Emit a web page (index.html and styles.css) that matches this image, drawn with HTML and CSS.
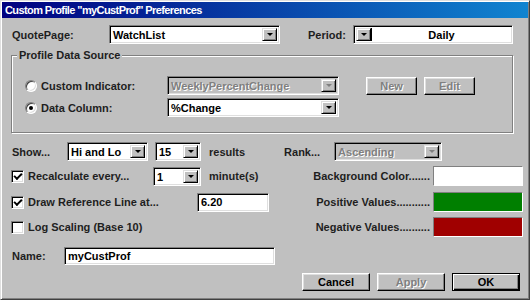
FILE: index.html
```html
<!DOCTYPE html>
<html>
<head>
<meta charset="utf-8">
<link rel="stylesheet" href="styles.css">
</head>
<body>
<div class="window">
  <div class="titlebar">Custom Profile "myCustProf" Preferences</div>
  <div class="content">
    <div class="row row-quote">
      <span class="lbl lbl-quote">QuotePage:</span>
      <div class="combo combo-quote"><span class="val">WatchList</span><span class="arrow"></span></div>
      <span class="lbl lbl-period">Period:</span>
      <div class="combo combo-period"><span class="arrow"></span><span class="val val-center">Daily</span></div>
    </div>

    <fieldset class="group">
      <legend>Profile Data Source</legend>
      <div class="row row-src1">
        <span class="radio"></span>
        <span class="lbl lbl-src">Custom Indicator:</span>
        <div class="combo combo-src disabled"><span class="val">WeeklyPercentChange</span><span class="arrow"></span></div>
        <button class="btn btn-small disabled btn-new">New</button>
        <button class="btn btn-small disabled">Edit</button>
      </div>
      <div class="row row-src2">
        <span class="radio checked"></span>
        <span class="lbl lbl-src">Data Column:</span>
        <div class="combo combo-src"><span class="val">%Change</span><span class="arrow"></span></div>
      </div>
    </fieldset>

    <div class="row row-show">
      <span class="lbl lbl-show">Show...</span>
      <div class="combo combo-hilo"><span class="val">Hi and Lo</span><span class="arrow"></span></div>
      <div class="combo combo-num"><span class="val">15</span><span class="arrow"></span></div>
      <span class="lbl lbl-results">results</span>
      <span class="lbl lbl-rank">Rank...</span>
      <div class="combo combo-rank disabled"><span class="val">Ascending</span><span class="arrow"></span></div>
    </div>

    <div class="row row-recalc">
      <span class="check checked"></span>
      <span class="lbl lbl-recalc">Recalculate every...</span>
      <div class="combo combo-min"><span class="val">1</span><span class="arrow"></span></div>
      <span class="lbl lbl-results">minute(s)</span>
      <span class="lbl lbl-color">Background Color.......</span>
      <span class="swatch swatch-white"></span>
    </div>

    <div class="row row-ref">
      <span class="check checked"></span>
      <span class="lbl lbl-ref">Draw Reference Line at...</span>
      <div class="field field-ref">6.20</div>
      <span class="lbl lbl-color lbl-pos">Positive Values...........</span>
      <span class="swatch swatch-green"></span>
    </div>

    <div class="row row-log">
      <span class="check"></span>
      <span class="lbl lbl-log">Log Scaling (Base 10)</span>
      <span class="lbl lbl-color lbl-neg">Negative Values..........</span>
      <span class="swatch swatch-red"></span>
    </div>

    <div class="row row-name">
      <span class="lbl lbl-name">Name:</span>
      <div class="field field-name">myCustProf</div>
    </div>

    <div class="row row-buttons">
      <button class="btn btn-big">Cancel</button>
      <button class="btn btn-big disabled">Apply</button>
      <button class="btn btn-big btn-default">OK</button>
    </div>
  </div>
</div>
</body>
</html>
```

FILE: styles.css
```css
* { box-sizing: border-box; }
html, body { margin: 0; padding: 0; }
body {
  width: 530px;
  height: 300px;
  overflow: hidden;
  background: #c0c0c0;
  font-family: "Liberation Sans", Arial, sans-serif;
  font-size: 11px;
  font-weight: bold;
  color: #1e1e1e;
}
.window {
  width: 530px;
  height: 300px;
  background: #c0c0c0;
  border: 1px solid;
  border-color: #dfdfdf #404040 #404040 #dfdfdf;
  box-shadow: inset 1px 1px #fff, inset -1px -1px #808080;
  padding: 1px;
}
.titlebar {
  height: 16px;
  background: linear-gradient(to right, #000080, #1084d0);
  color: #fff;
  font-size: 11px;
  line-height: 16px;
  padding-left: 3px;
  letter-spacing: -0.6px;
}
.content {
  padding-left: 8px;
}
.row {
  display: flex;
  align-items: center;
}
.lbl { white-space: nowrap; }

/* combo boxes */
.combo {
  display: flex;
  align-items: stretch;
  height: 19px;
  background: #fff;
  border: 1px solid;
  border-color: #808080 #fff #fff #808080;
  box-shadow: inset 1px 1px #000, inset -1px -1px #dfdfdf;
  padding: 2px;
  color: #000;
}
.combo .val {
  flex: 1;
  padding-left: 1px;
  line-height: 14px;
  white-space: nowrap;
  overflow: hidden;
}
.val-center { text-align: center; }
.arrow {
  width: 15px;
  flex: none;
  background: #c0c0c0;
  border: 1px solid;
  border-color: #dfdfdf #000 #000 #dfdfdf;
  box-shadow: inset 1px 1px #fff, inset -1px -1px #808080;
  display: flex;
  align-items: center;
  justify-content: center;
}
.arrow::after {
  content: "";
  border-left: 3px solid transparent;
  border-right: 3px solid transparent;
  border-top: 3px solid #000;
}
.combo.disabled { background: #c0c0c0; }
.combo.disabled .val, .btn.disabled {
  color: #808080;
  text-shadow: 1px 1px #fff;
}
.combo.disabled .arrow::after { border-top-color: #808080; }

/* row 1 */
.row-quote { margin-top: 7px; height: 19px; }
.lbl-quote { width: 99px; padding-left: 2px; }
.combo-quote { width: 171px; }
.lbl-period { margin-left: 28px; width: 45px; }
.combo-period { width: 160px; padding: 2px; }
.combo-period .val {
  border-left: 1px solid #000;
}

/* group box */
.group {
  margin: 5px 0 0 1px;
  width: 502px;
  height: 84px;
  padding: 0;
  border: 1px solid #808080;
  box-shadow: inset 1px 1px #fff, 1px 1px #fff;
}
.group legend {
  margin-left: 5px;
  padding: 0 2px;
  background: #c0c0c0;
  line-height: 13px;
}
.row-src1 { margin-top: 14px; height: 19px; }
.row-src2 { margin-top: 3px; height: 19px; }
.radio {
  width: 12px;
  height: 12px;
  border-radius: 50%;
  margin-left: 13px;
  margin-right: 4px;
  background: #fff;
  border: 1px solid;
  border-color: #808080 #fff #fff #808080;
  box-shadow: inset 1px 1px #404040, inset -1px -1px #dfdfdf;
  display: flex;
  align-items: center;
  justify-content: center;
  flex: none;
}
.radio.checked::after {
  content: "";
  width: 4px;
  height: 4px;
  border-radius: 50%;
  background: #000;
}
.lbl-src { width: 126px; }
.combo-src { width: 172px; }

.btn {
  font-family: inherit;
  font-size: 11px;
  font-weight: bold;
  color: #000;
  background: #c0c0c0;
  border: 1px solid;
  border-color: #fff #000 #000 #fff;
  box-shadow: inset -1px -1px #808080, inset 1px 1px #dfdfdf;
  padding: 0;
  height: 18px;
}
.btn-small { width: 51px; margin-left: 7px; }
.btn-new { margin-left: 27px; }

/* show row */
.row-show { margin-top: 9px; height: 19px; }
.lbl-show { width: 57px; padding-left: 2px; }
.combo-hilo { width: 81px; }
.combo-num { width: 46px; margin-left: 7px; }
.lbl-results { margin-left: 8px; }
.lbl-rank { margin-left: 39px; width: 50px; }
.combo-rank { width: 108px; }

/* checkbox rows */
.check {
  width: 13px;
  height: 13px;
  flex: none;
  margin-left: 1px;
  margin-right: 4px;
  background: #fff;
  border: 1px solid;
  border-color: #808080 #fff #fff #808080;
  box-shadow: inset 1px 1px #000, inset -1px -1px #dfdfdf;
  display: flex;
  align-items: center;
  justify-content: center;
}
.check.checked::after {
  content: "";
  width: 6px;
  height: 3px;
  border-left: 2px solid #000;
  border-bottom: 2px solid #000;
  transform: translateY(-1px) rotate(-45deg);
}
.row-recalc { margin-top: 5px; height: 20px; }
.lbl-recalc { width: 125px; }
.combo-min { width: 48px; }
.lbl-color { margin-left: auto; }
.swatch {
  width: 90px;
  height: 20px;
  margin-left: 3px;
  margin-right: 5px;
  border: 1px solid;
  border-color: #808080 #fff #fff #808080;
  flex: none;
}
.swatch-white { background: #fff; }
.swatch-green { background: #007f00; }
.swatch-red { background: #a00000; }

.row-ref { margin-top: 6px; height: 20px; }
.lbl-ref { width: 169px; }
.field {
  height: 19px;
  background: #fff;
  border: 1px solid;
  border-color: #808080 #fff #fff #808080;
  box-shadow: inset 1px 1px #000, inset -1px -1px #dfdfdf;
  padding: 0 3px;
  line-height: 17px;
  color: #000;
}
.field-ref { width: 72px; }

.row-log { margin-top: 5px; height: 20px; }

.row-name { margin-top: 10px; height: 18px; }
.lbl-name { width: 54px; padding-left: 2px; }
.field-name { width: 211px; height: 18px; line-height: 16px; }

.row-buttons {
  margin-top: 8px;
  height: 18px;
  justify-content: flex-end;
  padding-right: 8px;
}
.btn-big { width: 68px; margin-left: 7px; height: 18px; }
.btn-default {
  border: 1px solid #000;
  box-shadow: inset 1px 1px #fff, inset -1px -1px #000, inset -2px -2px #808080;
}
```
